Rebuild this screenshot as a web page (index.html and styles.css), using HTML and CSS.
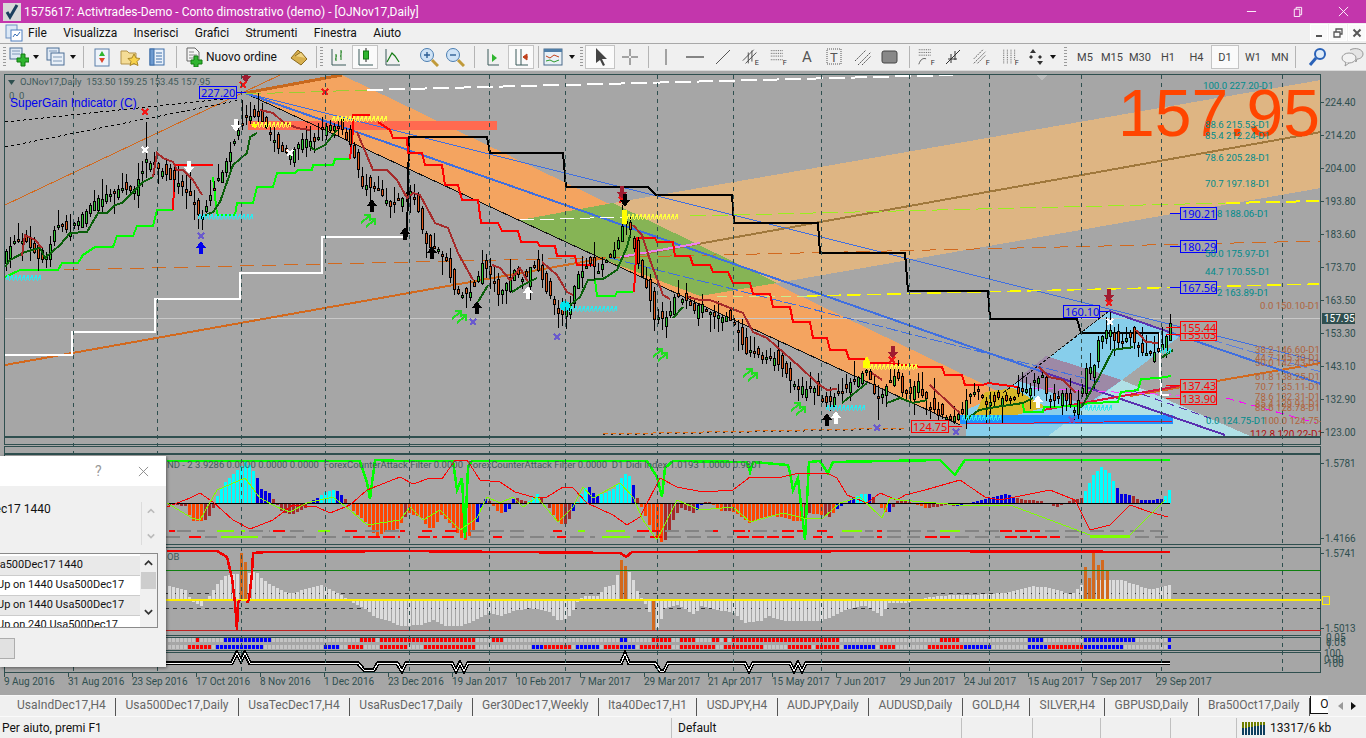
FILE: index.html
```html
<!DOCTYPE html>
<html lang="it">
<head>
<meta charset="utf-8">
<title>MetaTrader</title>
<link rel="stylesheet" href="styles.css">
</head>
<body>
<div class="app">
  <header class="titlebar">
    <svg class="appicon" viewBox="0 0 18 18"><rect width="18" height="18" fill="#d8d8d8"/><path d="M4 9l3 5 7-12" fill="none" stroke="#1c3f5e" stroke-width="3"/></svg>
    <span class="title">1575617: Activtrades-Demo - Conto dimostrativo (demo) - [OJNov17,Daily]</span>
    <div class="winctl">
      <span class="wc"><svg viewBox="0 0 12 12"><path d="M1 6h10" stroke="#fff"/></svg></span>
      <span class="wc"><svg viewBox="0 0 12 12"><path d="M2.500 3.500h6v8h-6zM4.500 3.500v-2h6v8h-2" fill="none" stroke="#fff"/></svg></span>
      <span class="wc"><svg viewBox="0 0 12 12"><path d="M1 1l10 10M11 1L1 11" stroke="#fff"/></svg></span>
    </div>
  </header>

  <nav class="menubar">
    <svg class="menuicon" viewBox="0 0 18 18"><rect x="1" y="1" width="11" height="13" fill="#dbe8f6" stroke="#6b8fc0"/><rect x="6" y="6" width="11" height="11" fill="#fff" stroke="#4f7fc0"/><path d="M8 13l2-3 2 2 3-4" fill="none" stroke="#3a6fb5"/></svg>
    <span class="mi">File</span><span class="mi">Visualizza</span><span class="mi">Inserisci</span><span class="mi">Grafici</span><span class="mi">Strumenti</span><span class="mi">Finestra</span><span class="mi">Aiuto</span>
    <div class="mdi">
      <span class="mdib"><svg viewBox="0 0 10 10"><path d="M2 8h6" stroke="#555" stroke-width="2"/></svg></span>
      <span class="mdib"><svg viewBox="0 0 10 10"><path d="M1 4h6v5H1zM3 4V1h6v5H7" fill="none" stroke="#555" stroke-width="1.300"/></svg></span>
      <span class="mdib"><svg viewBox="0 0 10 10"><path d="M1.500 1.500l7 7M8.500 1.500l-7 7" stroke="#555" stroke-width="2"/></svg></span>
    </div>
  </nav>

  <div class="toolbar">
    <span class="t"><i class="grip"></i></span>
    <span class="t"><svg class="ic" viewBox="0 0 20 20"><rect x="1" y="1" width="12" height="11" fill="#dfe9f5" stroke="#4c6f96"/><path d="M3 4h8M3 7h8" stroke="#7f99b8"/><path d="M12 7h4v4h4v4h-4v4h-4v-4H8v-4h4z" fill="#2fb52f" stroke="#137a13"/></svg></span>
    <span class="t"><i class="drop"></i></span>
    <span class="t"><svg class="ic" viewBox="0 0 20 20"><rect x="1" y="1" width="12" height="12" fill="#dfe9f5" stroke="#4c6f96"/><rect x="5" y="6" width="13" height="12" fill="#e9f0f8" stroke="#4c6f96"/><path d="M3 4h8M7 10h9M7 14h9" stroke="#7f99b8"/></svg></span>
    <span class="t"><i class="drop"></i></span>
    <span class="t"><i class="sep"></i></span>
    <span class="t"><svg class="ic" viewBox="0 0 20 20"><rect x="3" y="2" width="14" height="17" fill="#eef3fa" stroke="#5b7fa8"/><path d="M7 9l3-5 3 5z" fill="#2fb52f"/><path d="M7 11l3 5 3-5z" fill="#e0442a"/></svg></span>
    <span class="t"><svg class="ic" viewBox="0 0 20 20"><path d="M1 4h6l2 2h7v11H1z" fill="#f4dc96" stroke="#b3934a"/><path d="M14 7l2 4 4 .500-3 3 1 4-4-2-4 2 1-4-3-3 4-.500z" fill="#f8d24a" stroke="#a8862a"/></svg></span>
    <span class="t"><svg class="ic" viewBox="0 0 20 20"><rect x="3" y="2" width="14" height="16" fill="#e8f0fa" stroke="#3e6ea8"/><rect x="3" y="2" width="4" height="16" fill="#6d9ad0" stroke="#3e6ea8"/><path d="M9 6h6M9 9h6M9 12h6M9 15h6" stroke="#3e6ea8"/></svg></span>
    <span class="t"><i class="sep"></i></span>
    <span class="t order"><svg class="ic" viewBox="0 0 20 20"><path d="M3 1h8l4 4v9H3z" fill="#f4f4f4" stroke="#666"/><path d="M5 5h5M5 8h8M5 11h8" stroke="#888"/><path d="M10 9h4v4h4v4h-4v3h-4v-3H7v-4h3z" fill="#2fb52f" stroke="#137a13"/></svg><span>Nuovo ordine</span></span>
    <span class="t"><svg class="ic" viewBox="0 0 20 20"><path d="M2 11l7-8 9 9-6 6z" fill="#d8b04e" stroke="#8a6a20"/><path d="M6 9l6-4 5 6" fill="#f0d484" stroke="#8a6a20"/></svg></span>
    <span class="t"><i class="sep"></i></span>
    <span class="t"><i class="grip"></i></span>
    <span class="t"><svg class="ic" viewBox="0 0 20 20"><path d="M4 2v16h14" fill="none" stroke="#3b5a5a"/><path d="M8 7v7M7 12h1M8 9h1M13 3v10M12 9h1M13 5h1" fill="none" stroke="#127a12"/></svg></span>
    <span class="t on"><svg class="ic" viewBox="0 0 20 20"><path d="M4 2v16h14" fill="none" stroke="#3b5a5a"/><path d="M11 1v14" stroke="#222"/><rect x="8.500" y="4" width="5" height="8" fill="#2fb52f" stroke="#137a13"/></svg></span>
    <span class="t"><svg class="ic" viewBox="0 0 20 20"><path d="M4 2v16h14" fill="none" stroke="#3b5a5a"/><path d="M5 15l5-9 3 3 4 6" fill="none" stroke="#127a12" stroke-width="1.200"/></svg></span>
    <span class="t"></span>
    <span class="t"><svg class="ic" viewBox="0 0 20 20"><circle cx="8" cy="8" r="6.500" fill="#cfe3f6" stroke="#4a7db0"/><path d="M5 8h6M8 5v6" stroke="#2e5f95" stroke-width="1.400"/><path d="M13 13l6 6" stroke="#c09a3a" stroke-width="3"/></svg></span>
    <span class="t"><svg class="ic" viewBox="0 0 20 20"><circle cx="8" cy="8" r="6.500" fill="#cfe3f6" stroke="#4a7db0"/><path d="M5 8h6" stroke="#2e5f95" stroke-width="1.400"/><path d="M13 13l6 6" stroke="#c09a3a" stroke-width="3"/></svg></span>
    <span class="t"><i class="sep"></i></span>
    <span class="t"><svg class="ic" viewBox="0 0 20 20"><path d="M5 2v16h11" fill="none" stroke="#3b5a5a"/><path d="M9 7l5 4-5 4z" fill="#2fb52f"/></svg></span>
    <span class="t"><span class="on onb"><svg class="ic" viewBox="0 0 20 20"><path d="M5 2v16h12M10 2v16" fill="none" stroke="#3b5a5a"/><path d="M17 10h-5M12 10l4-3v6z" fill="#c0401a" stroke="#c0401a"/></svg></span></span>
    <span class="t"><i class="sep"></i></span>
    <span class="t"><svg class="ic" viewBox="0 0 20 20"><rect x="1" y="2" width="18" height="16" fill="#e8f0f6" stroke="#4a6a8a"/><rect x="1" y="2" width="18" height="3" fill="#4f7ea8"/><path d="M3 9l4 2 4-3 5 2" fill="none" stroke="#c0401a"/><path d="M3 14l4-1 4 2 5-2" fill="none" stroke="#2a9a2a"/></svg></span>
    <span class="t"><i class="drop"></i></span>
    <span class="t"><i class="grip"></i></span>
    <span class="t on"><svg class="ic" viewBox="0 0 20 20"><path d="M6 1v15l4-3 3 6 2-1-3-6h5z" fill="#444"/></svg></span>
    <span class="t"><svg class="ic" viewBox="0 0 20 20"><path d="M10 2v7M10 11v7M2 10h7M11 10h7" stroke="#555"/></svg></span>
    <span class="t"><i class="sep"></i></span>
    <span class="t"><svg class="ic" viewBox="0 0 20 20"><path d="M10 2v16" stroke="#555"/></svg></span>
    <span class="t"><svg class="ic" viewBox="0 0 20 20"><path d="M1 10h18" stroke="#555" stroke-width="1.400"/></svg></span>
    <span class="t"><svg class="ic" viewBox="0 0 20 20"><path d="M3 17L17 3" stroke="#555"/></svg></span>
    <span class="t"><svg class="ic" viewBox="0 0 22 20"><path d="M2 14L14 2M5 17L17 5M8 17V5M12 15V3" stroke="#444" fill="none"/><text x="15" y="19" class="ict">E</text></svg></span>
    <span class="t"><svg class="ic" viewBox="0 0 22 20"><path d="M2 3h14M2 6h14M2 9h14M2 13h14" stroke="#555" stroke-dasharray="1 1" fill="none"/><text x="15" y="19" class="ict">F</text></svg></span>
    <span class="t tA">A</span>
    <span class="t"><svg class="ic" viewBox="0 0 20 20"><rect x="2" y="2" width="14" height="15" fill="none" stroke="#555" stroke-dasharray="1 1"/><text x="5" y="15" class="icT">T</text></svg></span>
    <span class="t"><svg class="ic" viewBox="0 0 20 20"><path d="M2 14L13 3M5 18L18 5M9 18l9-9" stroke="#555" stroke-dasharray="2 1" fill="none"/></svg></span>
    <span class="t"><svg class="ic" viewBox="0 0 20 20"><rect x="2" y="4" width="15" height="12" rx="2" fill="#888" stroke="#444"/></svg></span>
    <span class="t"><i class="sep"></i></span>
    <span class="t"><svg class="ic" viewBox="0 0 22 20"><path d="M2 2h14M2 5h14M2 8h14" stroke="#555" stroke-dasharray="1 1" fill="none"/><path d="M2 18c2-6 5-7 8-6" stroke="#555" fill="none"/><text x="15" y="19" class="ict">F</text></svg></span>
    <span class="t"><svg class="ic" viewBox="0 0 20 20"><path d="M2 17L16 3M7 16V7M11 13V4M4 12h9" stroke="#333" fill="none"/></svg></span>
    <span class="t"><svg class="ic" viewBox="0 0 22 20"><path d="M2 12L12 2M2 17L15 4M6 17l9-9" stroke="#555" stroke-dasharray="2 1" fill="none"/><text x="15" y="19" class="ict">F</text></svg></span>
    <span class="t"><svg class="ic" viewBox="0 0 22 20"><path d="M3 2v16M7 2v16M11 2v16M15 2v11" stroke="#555" stroke-dasharray="1 1" fill="none"/><text x="15" y="19" class="ict">F</text></svg></span>
    <span class="t"><svg class="ic" viewBox="0 0 20 20"><path d="M6 2l3 4H3zM13 18l3-4h-6zM4 8l2 2-2 2-2-2zM13 8l2 2-2 2-2-2z" fill="#333"/></svg></span>
    <span class="t"><i class="drop"></i></span>
    <span class="t"><i class="grip"></i></span>
    <span class="t tf">M5</span><span class="t tf">M15</span><span class="t tf">M30</span><span class="t tf">H1</span><span class="t tf">H4</span><span class="t tf on">D1</span><span class="t tf">W1</span><span class="t tf">MN</span>
    <span class="t"><i class="sep"></i></span>
    <span class="t"><svg class="ic" viewBox="0 0 20 20"><circle cx="12" cy="7" r="5" fill="#e0ecf8" stroke="#2a62b8" stroke-width="2"/><path d="M8 11l-6 7" stroke="#2a62b8" stroke-width="3"/></svg></span>
    <span class="t"><svg class="ic chat" viewBox="0 0 24 20"><path d="M9 3c5-3 13-1 13 4 0 3-3 5-6 5l-1 3-2-3" fill="#e4e4e4" stroke="#999"/><ellipse cx="8" cy="11" rx="7" ry="5" fill="#f2f2f2" stroke="#999"/><path d="M5 15l-1 4 4-3" fill="#f2f2f2" stroke="#999"/></svg></span>
  </div>

  <main class="chart">
    <svg id="plot" class="plot" viewBox="0 70 1366 625" width="1366" height="625"></svg>
  </main>

  <div class="tabs">
    <span class="tab first">UsaIndDec17,H4</span>
    <span class="tab">Usa500Dec17,Daily</span>
    <span class="tab">UsaTecDec17,H4</span>
    <span class="tab">UsaRusDec17,Daily</span>
    <span class="tab">Ger30Dec17,Weekly</span>
    <span class="tab">Ita40Dec17,H1</span>
    <span class="tab">USDJPY,H4</span>
    <span class="tab">AUDJPY,Daily</span>
    <span class="tab">AUDUSD,Daily</span>
    <span class="tab">GOLD,H4</span>
    <span class="tab">SILVER,H4</span>
    <span class="tab">GBPUSD,Daily</span>
    <span class="tab">Bra50Oct17,Daily</span>
    <span class="tab active">OJ</span>
    <span class="tabscroll"><i class="al"></i><i class="ar"></i></span>
  </div>

  <footer class="status">
    <span class="s s1">Per aiuto, premi F1</span>
    <span class="s s2">Default</span>
    <span class="s s3"></span>
    <span class="s s4"></span>
    <span class="s s5"></span>
    <span class="s s6"></span>
    <span class="s s7"><svg class="bars" viewBox="0 0 24 14"><path d="M1 14V7M4 14V7M7 14V6M10 14V6M13 14V5M16 14V5M19 14V4M22 14V4" stroke="#0f3f5f" stroke-width="2"/><path d="M1 7V1M4 7V1M7 6V1M10 6V1M13 5V1M16 5V1M19 4V1M22 4V1" stroke="#6f7f00" stroke-width="2"/></svg><span>13317/6 kb</span></span>
  </footer>

  <section class="dialog">
    <div class="dlgtitle"><span class="q">?</span><svg class="dx" viewBox="0 0 12 12"><path d="M1 1l10 10M11 1L1 11" stroke="#888"/></svg></div>
    <div class="dlgbody">
      <div class="msg">
        <p class="msgtext">Usa500Dec17 1440</p>
        <div class="msgscroll"><svg viewBox="0 0 10 40" class="mss"><path d="M1 6l4-4 4 4" fill="none" stroke="#bbb" stroke-width="2"/><path d="M1 33l4 4 4-4" fill="none" stroke="#bbb" stroke-width="2"/></svg></div>
      </div>
      <div class="list">
        <div class="rows">
          <div class="row alt i1">sa500Dec17 1440</div>
          <div class="row i2">Up on 1440 Usa500Dec17</div>
          <div class="row alt i2">Up on 1440 Usa500Dec17</div>
          <div class="row i2">Up on 240 Usa500Dec17</div>
        </div>
        <div class="sb"><svg viewBox="0 0 10 8" class="ch"><path d="M1 6l4-4 4 4" fill="none" stroke="#333" stroke-width="2"/></svg><i class="thumb"></i><svg viewBox="0 0 10 8" class="ch chd"><path d="M1 2l4 4 4-4" fill="none" stroke="#333" stroke-width="2"/></svg></div>
      </div>
      <div class="btn"></div>
    </div>
  </section>
</div>
<script src="chart.js"></script>
</body>
</html>
```
FILE: styles.css
```css
*{box-sizing:border-box}
html,body{margin:0;padding:0;height:100%;overflow:hidden;background:#f0f0f0}
body{font-family:Roboto,"Noto Sans",sans-serif;font-size:12px;color:#111}
.app{position:relative;width:1366px;height:738px;display:flex;flex-direction:column;overflow:hidden}

.titlebar{height:23px;background:#c336ac;display:flex;align-items:center;padding-left:3px;color:#fff}
.appicon{width:18px;height:18px;flex:none}
.title{margin-left:3px;font-size:12px;white-space:nowrap}
.winctl{margin-left:auto;display:flex;height:23px}
.wc{width:46px;display:flex;align-items:center;justify-content:center}
.wc svg{width:11px;height:11px}

.menubar{height:21px;background:#f0f0f0;display:flex;align-items:center;padding-left:5px;border-bottom:1px solid #a8a8a8}
.menuicon{width:18px;height:18px;flex:none;margin-right:5px}
.mi{padding:0 16.300px 0 0;font-size:12px;white-space:nowrap}
.mdi{margin-left:auto;display:flex;gap:1px;padding-right:0;align-self:flex-start;margin-top:1px}
.mdib{width:18px;height:17px;background:#fafafa;border:1px solid #fff;display:flex;align-items:center;justify-content:center}
.mdib svg{width:10px;height:10px}

.toolbar{height:26px;background:#f0f0f0;display:grid;grid-auto-flow:column;align-items:center;
 grid-template-columns:8px 22px 12px 28px 6px 14px 24px 32px 22px 16px 100px 30px 4px 6px 28px 26px 28px 10px 26px 26px 12px 26px 30px 4px 26px 11px 8px 30px 30px 6px 30px 28px 28px 28px 28px 28px 28px 27px 28px 10px 26px 28px 28px 30px 22px 10px 14px 26px 28px 28px 28px 29px 28px 28px 26px 4px 42px 27px}
.t{display:flex;align-items:center;justify-content:center;height:24px}
.ic{width:20px;height:20px;flex:none}
.ic.chat{width:24px}
.on{background:#fafafa;border:1px solid #c4c4c4}
.onb{width:26px;height:24px;display:flex;align-items:center;justify-content:center}
.grip{display:block;width:3px;height:20px;background:repeating-linear-gradient(#9a9a9a 0 1px,transparent 1px 3px)}
.sep{display:block;width:1px;height:22px;background:#b4b4b4}
.drop{display:block;width:0;height:0;border:3px solid transparent;border-top:4px solid #111;border-bottom:0}
.order{justify-content:flex-start;padding-left:0;gap:2px;font-size:12px;white-space:nowrap}
.tf{font-size:11px;color:#444}
.tA{font-size:15px;color:#555}
.ict{font:8px Roboto,sans-serif;fill:#333}
.icT{font:13px Roboto,sans-serif;fill:#555}

.chart{height:625px;background:#a6a6a6;border-top:1px solid #dadada;overflow:hidden;position:relative}
.plot{display:block;margin-top:-1px}
.plot text{font-family:Roboto,sans-serif;font-size:10px;shape-rendering:auto}
.plot .lbl{font-family:"Noto Sans",sans-serif;font-size:11px}
.plot .big{font-family:"Liberation Sans",Arial,sans-serif;font-size:66px;fill:#ff4500}
.plot .sg{font-family:"Liberation Sans",Arial,sans-serif;font-size:12px;fill:#0000f0}
.plot .hd{fill:#3f5a5a;font-size:9.500px}
.plot .ax{fill:#2f4f4f;font-size:10px}
.plot .fibt{fill:#008b8b;font-size:9.600px}
.plot .fibb{fill:#b0643c;font-size:9.600px}

.tabs{height:21px;background:#f0f0f0;display:flex;align-items:flex-start;position:relative;padding-left:4px;border-top:1px solid #f7f7f7;overflow:hidden;border-left:0}
.tab{height:18px;margin-top:2px;padding:0 9.350px;font-size:12px;line-height:15px;color:#666;white-space:nowrap;border-right:1px solid #555;flex:none}
.tab.first{padding-left:13px}
.tab.active{background:#fff;border:1px solid #111;border-top:0;color:#111;margin-top:0;height:18px;padding-top:1px;width:40px}
.tabscroll{position:absolute;right:0;top:0;width:38px;height:20px;background:#f0f0f0;display:flex;align-items:center;justify-content:space-around;padding:0 6px}
.al{width:0;height:0;border:4px solid transparent;border-right:5px solid #999;border-left:0}
.ar{width:0;height:0;border:4px solid transparent;border-left:5px solid #111;border-right:0}

.status{height:22px;background:#f0f0f0;display:flex;align-items:center;font-size:12px;border-top:1px solid #fafafa}
.s{height:20px;display:flex;align-items:center;border-right:1px solid #c0c0c0;white-space:nowrap}
.s1{width:672px;padding-left:2px}
.s2{width:290px;padding-left:6px}
.s3{width:71px}.s4{width:68px}.s5{width:70px}.s6{width:66px}
.s7{flex:1;border-right:0;padding-left:5px;gap:4px}
.bars{width:24px;height:14px}

.dialog{position:absolute;left:0;top:456px;width:166px;height:211px;background:#f0f0f0;box-shadow:1px 1px 3px rgba(0,0,0,.45);display:flex;flex-direction:column;overflow:hidden}
.dlgtitle{height:30px;background:#fff;position:relative;display:flex;align-items:center;flex:none}
.q{margin-left:95px;font-size:14px;color:#999}
.dx{width:11px;height:11px;margin-left:36px}
.dlgbody{flex:1;display:flex;flex-direction:column}
.msg{height:67px;position:relative;display:flex;flex:none}
.msgtext{margin:16px 0 0 -54px;font-size:12px;white-space:nowrap;width:195px}
.msgscroll{width:22px;border-left:1px solid #dcdcdc;height:43px;margin-top:16px;flex:none}
.mss{display:block;width:8px;height:40px;margin:2px 0 0 5px}
.list{width:158px;height:75px;border:1px solid #8a8a8a;border-left:0;background:#fff;display:flex;flex:none;overflow:hidden}
.rows{flex:1;overflow:hidden;padding-top:2px}
.row{height:20px;line-height:18px;border-bottom:1px solid #ccc;font-size:11px;white-space:nowrap;overflow:hidden}
.alt{background:#e9e9e9}
.i1{text-indent:-6px}
.i2{text-indent:-3px}
.sb{width:17px;background:#f0f0f0;display:flex;flex-direction:column;align-items:center;flex:none;padding-top:5px}
.ch{width:9px;height:8px;flex:none}
.thumb{display:block;width:15px;height:17px;background:#cdcdcd;margin-top:5px}
.chd{margin-top:19px}
.btn{width:15px;height:21px;margin-top:10px;background:#e1e1e1;border:1px solid #adadad;border-left:0}
```
FILE: chart.js
```js
(function(){
var svg=document.getElementById('plot'),o=[];
var DS='#2f4f4f';
function pts(a){return a.map(function(p){return p[0]+','+p[1]}).join(' ')}
function pl(a,c,w,d){o.push('<polyline points="'+pts(a)+'" fill="none" stroke="'+c+'" stroke-width="'+(w||1)+'"'+(d?' stroke-dasharray="'+d+'"':'')+'/>')}
function pg(a,c){o.push('<polygon points="'+pts(a)+'" fill="'+c+'"/>')}
function rc(x,y,w,h,c,s){o.push('<rect x="'+x+'" y="'+y+'" width="'+w+'" height="'+h+'" fill="'+c+'"'+(s?' stroke="'+s+'"':'')+'/>')}
function tx(x,y,t,cl,fill,a){o.push('<text x="'+x+'" y="'+y+'"'+(cl?' class="'+cl+'"':'')+(fill?' fill="'+fill+'"':'')+(a?' text-anchor="'+a+'"':'')+'>'+t+'</text>')}
function interp(a,x){if(x<=a[0][0])return a[0][1];for(var i=1;i<a.length;i++){if(x<=a[i][0]){var t=(x-a[i-1][0])/(a[i][0]-a[i-1][0]);return a[i-1][1]+t*(a[i][1]-a[i-1][1])}}return a[a.length-1][1]}
var seed=7;function R(){seed=(seed*16807)%2147483647;return seed/2147483647}

o.push('<defs><clipPath id="mc"><rect x="5" y="75" width="1316" height="361"/></clipPath></defs>');
o.push('<g shape-rendering="crispEdges">');
o.push('<g clip-path="url(#mc)">');

/* filled objects */
pg([[613,203],[1321,80],[1321,188],[777,283]],'#deb583');
pg([[245,93],[342,75],[1010,397],[960,425]],'#f4a460');
pg([[520,220],[613,203],[777,283],[700,296],[600,258]],'#86b455');
rc(248,121,249,9,'#ff6a50');
pg([[1003,393],[1109,311],[1179,337],[1122,380],[1048,436],[966,436],[966,410]],'#87ceeb');
pg([[1122,380],[1250,436],[1048,436]],'#b0e0e6');
pg([[1016,380],[1046,356],[1122,380],[1086,405]],'#9d89a6');
pg([[985,392],[1013,388],[1046,407],[1016,415],[975,415]],'#d8b828');
rc(960,415,213,9,'#1e90ff');

/* grey last price line */
pl([[5,318],[1321,318]],'#c8c8c8');

/* straight trend lines */
pl([[5,205],[280,75]],'#d2691e');
pl([[245,93],[342,75]],'#c8691e',3);
pl([[5,365],[605,258]],'#d2691e',2);
pl([[1130,396],[1321,363]],'#d2691e',2);
pl([[20,271],[1321,241]],'#d2691e',1,'14 8');
pl([[620,258],[1321,132]],'#a0783c',2);
pl([[5,122],[233,98]],'#000',1,'3 3');
pl([[5,147],[240,100]],'#000',1,'3 3');
pl([[245,93],[960,425]],'#111');
pl([[1003,393],[1109,311]],'#111',1,'4 1');
pl([[245,93],[1321,362]],'#3f6fe0');
pl([[610,258],[1100,382]],'#3f6fe0',1,'12 3');
pl([[245,93],[1040,371]],'#3f6fe0',2);
pl([[1040,371],[1225,435]],'#5a30b0',2);
pl([[1109,311],[1169,332]],'#5a30b0',2);
pl([[1169,332],[1321,384]],'#3f6fe0',2);
pl([[245,94],[367,90]],'#9acd32',1,'16 6');
pl([[367,90],[953,75]],'#fff',2,'16 6');
pl([[520,220],[625,217]],'#fff',1,'14 6');
pl([[690,216],[1226,203]],'#9aee20',1,'16 6');
pl([[1226,203],[1319,201]],'#ffff00',2,'14 6');
pl([[717,297],[807,296]],'#c8ee90',1,'10 6');
pl([[807,296],[1319,284]],'#ffff00',1.500,'14 6');
pl([[603,434],[905,428]],'#e06a10',1,'5 3');
pl([[603,435],[905,429]],'#222',1,'2 6');
pl([[1043,410],[1179,386]],'#dc143c',2);
pl([[966,424],[1173,421],[1316,421]],'#dc143c');
pl([[620,257],[700,243]],'#ee80ee',2);
pl([[1033,388],[1216,397]],'#ff40ff',1,'8 5');
pl([[1226,398],[1316,423]],'#ff00ff',1,'8 5');
pl([[1130,390],[1215,420]],'#5a30b0',1,'8 5');
pl([[1205,338],[1321,372]],'#5a7fe0',1,'18 4');

/* step lines */
pl([[5,355],[72,355],[72,332],[155,332],[155,299],[240,299],[240,273],[322,273],[322,237],[405,237]],'#fff',2);
pl([[407,237],[409,137],[487,137],[490,153],[563,153],[566,187],[648,187],[656,195],[732,195],[734,223],[818,223],[820,253],[905,253],[908,291],[988,291],[990,319],[1077,319],[1081,333],[1158,333]],'#000',2);
pl([[1159,333],[1161,395],[1169,395]],'#fff',2);
var GR='#00ff00',RD='#ff0000',DG='#0a5f0a',DR='#a52a2a';
pl([[5,277],[20,270],[58,270],[62,263],[78,263],[83,255],[95,247],[113,247],[117,236],[133,236],[137,226],[153,226],[157,210],[173,210]],GR,2);
pl([[173,210],[175,165],[213,165]],RD,2);
pl([[213,177],[217,215],[235,215],[237,203],[253,203],[257,187],[273,187],[277,173],[295,173],[298,170],[312,170],[313,165],[333,165],[335,159],[350,159]],GR,2);
pl([[350,159],[353,130],[353,115],[370,115]],RD,2);
pl([[378,122],[390,130],[393,138],[407,138],[408,153],[422,153],[425,165],[442,165],[445,185],[458,185],[462,200],[478,200],[481,223],[498,223],[502,231],[518,231],[521,242],[537,242],[540,246],[555,246],[557,256],[575,256],[577,265],[595,265]],RD,2);
pl([[595,280],[597,296],[615,296],[617,292],[633,292]],GR,2);
pl([[634,292],[637,238],[655,238],[657,242],[673,242],[675,256],[690,256],[693,265],[710,265],[713,272],[728,272],[733,283],[750,283],[753,294],[770,294],[773,307],[790,307],[793,322],[810,322],[813,338],[827,338],[830,350],[846,350],[849,359],[865,359],[868,363],[887,363],[922,367],[942,367],[945,375],[962,375],[965,385],[983,385],[988,383],[1018,387]],RD,2);
pl([[1023,403],[1024,412],[1043,412],[1044,407],[1079,406],[1089,403],[1118,402],[1121,392],[1138,390],[1141,379],[1159,378],[1171,376]],GR,2);

/* candles */
var path=[[5,255],[15,238],[25,240],[35,255],[45,260],[55,225],[70,230],[90,205],[105,195],[120,188],[135,190],[145,160],[155,165],[165,175],[175,180],[190,195],[200,220],[210,195],[222,170],[232,145],[245,115],[255,115],[265,125],[280,150],[290,155],[300,140],[315,140],[325,125],[340,125],[352,150],[362,185],[375,185],[390,205],[398,200],[412,190],[422,228],[425,242],[445,255],[449,273],[453,287],[462,295],[468,293],[477,282],[482,262],[490,273],[497,293],[505,287],[513,270],[525,280],[533,262],[545,287],[557,310],[562,315],[570,302],[577,277],[587,263],[597,270],[605,260],[613,252],[622,227],[625,217],[630,230],[637,260],[642,275],[649,293],[653,317],[662,320],[670,310],[673,295],[682,298],[693,310],[700,303],[713,315],[725,317],[733,320],[742,343],[746,352],[753,350],[762,358],[773,358],[782,368],[789,377],[798,388],[807,388],[813,385],[818,397],[825,402],[830,400],[842,390],[853,380],[862,372],[865,370],[869,377],[877,400],[885,390],[892,377],[897,377],[903,395],[913,390],[917,380],[922,393],[933,410],[942,415],[950,418],[962,413],[967,398],[978,390],[986,402],[999,398],[1011,398],[1029,387],[1041,373],[1046,393],[1054,402],[1061,392],[1066,398],[1073,410],[1081,393],[1086,367],[1093,370],[1098,340],[1103,337],[1108,323],[1113,337],[1121,343],[1129,333],[1136,348],[1146,352],[1153,352],[1158,350],[1166,335],[1170,322]];
var wick={146:[122,178],622:[205,240],243:[100,130],878:[385,420],1170:[314,335],558:[300,328],1110:[312,350],530:[285,300]};
for(var x=6;x<=1170;x+=4){
  var c=interp(path,x)+(R()-.5)*4,op=interp(path,x-4)+(R()-.5)*18,t=Math.min(c,op),b=Math.max(c,op);
  if(b-t<2){b=t+2}
  var up=c<op,wt=t-R()*R()*20-1,wb=b+R()*R()*20+1;
  for(var k in wick){if(Math.abs(+k-x)<2){wt=wick[k][0];wb=wick[k][1]}}
  t=Math.round(t);b=Math.round(b);
  o.push('<path d="M'+x+'.5 '+Math.round(wt)+'V'+Math.round(wb)+'" stroke="#000"/>');
  rc(x-.5,t+.5,2,b-t,up?'#2fc72f':'#e0581a','#000');
}

/* MA segments (drawn over the candles) */
pl([[5,267],[10,260],[25,252],[40,248],[45,258],[60,245],[70,233],[87,232],[98,213],[107,213],[115,205],[122,203],[143,182],[153,177]],DG,2);
pl([[22,256],[25,235],[35,240],[42,248]],DR,2);
pl([[153,177],[157,153],[163,158],[173,162],[177,170],[183,170],[193,180],[202,195]],DR,2);
pl([[202,217],[213,212],[220,202],[233,165],[247,153],[250,137],[257,133]],DG,2);
pl([[260,110],[273,113],[283,122],[297,128],[310,130]],DR,2);
pl([[310,147],[315,150],[325,145],[337,130]],DG,2);
pl([[357,132],[373,170],[387,170],[397,180],[407,198],[413,193],[420,195],[427,208],[435,223],[448,228],[458,253],[473,280]],DR,2);
pl([[478,302],[488,285]],DG,2);
pl([[492,265],[500,268],[510,280],[520,268],[528,282]],DR,2);
pl([[512,292],[523,285],[537,278]],DG,2);
pl([[542,262],[557,275],[567,292],[573,295]],DR,2);
pl([[570,305],[580,297],[588,280],[603,279],[617,270],[627,247],[630,235]],DG,2);
pl([[633,225],[642,235],[650,260],[663,295],[670,299]],DR,2);
pl([[673,318],[683,307]],DG,2);
pl([[688,297],[700,300],[710,300],[743,313],[753,332],[767,338],[800,367],[817,383],[827,390],[837,389]],DR,2);
pl([[842,403],[867,383]],DG,2);
pl([[872,373],[882,380]],DR,2);
pl([[887,403],[900,398],[913,403],[927,400]],DG,2);
pl([[930,385],[953,407],[960,413]],DR,2);
pl([[966,420],[979,410],[996,407],[1023,403],[1033,398]],DG,2);
pl([[1039,367],[1049,377],[1063,380],[1076,393]],DR,2);
pl([[1081,408],[1099,377],[1113,350],[1133,347]],DG,2);
pl([[1136,330],[1146,342],[1158,343]],DR,2);
pl([[1161,358],[1173,350]],DG,2);

/* markers */
function arrD(x,y,c){o.push('<path d="M'+(x-2)+' '+(y-8)+'h4v6h3l-5 7-5-7h3z" fill="'+c+'"/>')}
function arrU(x,y,c){o.push('<path d="M'+(x-2)+' '+(y+8)+'h4v-6h3l-5-7-5 7h3z" fill="'+c+'"/>')}
function xm(x,y,c){o.push('<path d="M'+(x-3)+' '+(y-3)+'l6 6M'+(x+3)+' '+(y-3)+'l-6 6" stroke="'+c+'" stroke-width="2"/>')}
function chev(x,y,c){o.push('<path d="M'+(x-7)+' '+(y+7)+'l8-7M'+(x-4)+' '+(y-1)+'h6v6M'+(x-2)+' '+(y+11)+'l8-7M'+(x+1)+' '+(y+3)+'h6v6" fill="none" stroke="'+c+'" stroke-width="2"/>')}
function teeth(x1,x2,y,c){var a=[];for(var x=x1;x<x2;x+=4){a.push([x,y+5],[x+2,y],[x+3,y+5])}pl(a,c,1)}
teeth(6,40,275,'#30e8ee');teeth(198,251,214,'#30e8ee');teeth(566,616,306,'#30e8ee');teeth(826,866,405,'#30e8ee');teeth(962,1002,415,'#30e8ee');teeth(1085,1110,405,'#30e8ee');teeth(1160,1172,348,'#30e8ee');
teeth(252,292,122,'#ffff40');teeth(332,385,116,'#ffff40');teeth(627,676,214,'#ffff40');teeth(866,916,364,'#ffff40');
o.push('<circle cx="565" cy="306" r="5" fill="#00e5ee"/>');
o.push('<path d="M250 124l5 5 3-5z" fill="#ffff00"/><path d="M622 210h5v14h-5z" fill="#ffff00"/><path d="M863 362l4-6 3 6v6h-7z" fill="#ffff00"/>');
[[622,194,'#a01c30'],[893,354,'#a01c30'],[1109,297,'#a01c30'],[246,78,'#a01c30']].forEach(function(a){arrD(a[0],a[1],a[2])});
[[145,112],[325,92],[243,85],[622,200],[892,360],[1109,303]].forEach(function(a){xm(a[0],a[1],'#f01818')});
[[201,236],[473,322],[557,337],[877,428],[956,432],[1072,420]].forEach(function(a){xm(a[0],a[1],'#6a5acd')});
arrU(201,246,'#0000ee');
arrD(189,169,'#fff');arrD(236,127,'#fff');arrU(528,291,'#fff');arrU(836,416,'#fff');
arrD(625,202,'#000');arrU(372,204,'#000');arrU(405,232,'#000');arrU(432,251,'#000');arrU(477,306,'#000');arrU(827,418,'#000');arrU(1038,400,'#fff');
chev(368,216,'#22dd22');chev(459,312,'#22dd22');chev(660,350,'#22dd22');chev(750,370,'#22dd22');chev(798,404,'#22dd22');
xm(145,150,'#fff');xm(290,153,'#fff');xm(1110,322,'#fff');
o.push('</g>');

/* pane frames */
[[437,444],[446,453],[454,544],[547,635],[637,650],[652,672]].forEach(function(a){o.push('<rect x="4.5" y="'+(a[0]+.5)+'" width="1316" height="'+(a[1]-a[0])+'" fill="none" stroke="'+DS+'"/>')});
o.push('<rect x="4.5" y="74.5" width="1316" height="362" fill="none" stroke="'+DS+'"/>');

/* pane 1 histogram */
var hs=[[167,-2,'b'],[185,-3,'b'],[190,-18,'o'],[203,-18,'o'],[207,-15,'b'],[213,-3,'b'],[217,10,'c'],[225,22,'c'],[235,32,'c'],[245,42,'c'],[255,28,'c'],[260,14,'B'],[268,10,'B'],[272,4,'b'],[280,-8,'b'],[290,-12,'b'],[305,-4,'b'],[310,2,'B'],[318,6,'B'],[325,12,'c'],[335,13,'c'],[340,8,'B'],[345,3,'b'],[352,-8,'o'],[365,-20,'o'],[375,-34,'o'],[385,-28,'o'],[395,-28,'o'],[400,-20,'o'],[407,-10,'b'],[420,-15,'o'],[427,-25,'o'],[433,-25,'o'],[440,-12,'o'],[450,-22,'o'],[460,-35,'o'],[465,-38,'o'],[475,-22,'o'],[477,-16,'B'],[482,3,'B'],[485,4,'B'],[488,2,'b'],[497,-9,'o'],[502,-10,'o'],[507,-8,'B'],[513,6,'B'],[520,3,'b'],[527,1,'b'],[533,7,'c'],[537,10,'c'],[542,3,'b'],[548,-5,'b'],[557,-20,'o'],[563,-22,'o'],[570,-14,'b'],[573,-5,'B'],[580,9,'c'],[585,17,'c'],[589,15,'B'],[593,8,'B'],[597,8,'B'],[603,9,'c'],[613,15,'c'],[620,25,'c'],[625,30,'c'],[630,25,'c'],[633,14,'B'],[637,2,'b'],[642,-8,'o'],[647,-20,'o'],[653,-30,'o'],[662,-42,'o'],[669,-25,'b'],[673,-14,'b'],[680,-5,'b'],[693,-10,'b'],[698,-5,'B'],[702,1,'B'],[708,1,'b'],[713,-3,'o'],[720,-8,'o'],[728,-8,'b'],[735,-10,'o'],[747,-20,'o'],[753,-18,'o'],[760,-15,'o'],[767,-13,'o'],[780,-14,'o'],[793,-18,'o'],[803,-18,'o'],[808,-10,'b'],[820,-12,'o'],[828,-14,'b'],[833,-9,'o'],[840,-3,'B'],[848,3,'B'],[853,6,'B'],[860,9,'c'],[867,9,'c'],[870,9,'B'],[873,4,'b'],[880,-5,'o'],[885,-10,'o'],[888,-9,'B'],[897,3,'b'],[905,2,'b'],[915,-2,'o'],[925,-5,'o'],[935,-4,'b'],[945,-2,'b'],[955,-3,'b'],[975,2,'B'],[985,4,'B'],[995,7,'B'],[1005,9,'B'],[1015,5,'B'],[1025,3,'b'],[1040,2,'b'],[1055,-4,'b'],[1070,3,'b'],[1080,5,'b'],[1085,14,'c'],[1092,28,'c'],[1100,36,'c'],[1108,30,'c'],[1115,16,'c'],[1120,9,'B'],[1130,8,'B'],[1138,3,'b'],[1148,3,'B'],[1160,4,'B'],[1165,8,'c'],[1169,15,'c']];
var hc={b:'#a52a2a',o:'#ff4500',c:'#00ffff',B:'#0000e0'};
function key(a,x){for(var i=0;i<a.length;i++){if(a[i][0]>=x)return a[i]}return a[a.length-1]}
for(var x=168;x<=1170;x+=4){var v=Math.round(interp(hs,x));if(!v)continue;var ct=hc[key(hs,x)[2]];if(v>0)rc(x,503-v,3,v,ct);else rc(x,503,3,-v,ct)}
pl([[167,503],[1170,503]],'#000');

/* dash rows */
function span(y,a){a.forEach(function(s){var col=s[2]=='g'?'#848484':s[2]=='r'?'#ff0000':'#7fff00';pl([[s[0],y],[s[1],y]],col,2,s[2]=='g'?'14 6':s[2]=='r'?'12 3':'')})}
span(531,[[169,175,'r'],[177,205,'g'],[217,234,'l'],[241,245,'l'],[249,270,'g'],[273,285,'r'],[290,310,'g'],[318,330,'l'],[345,360,'r'],[365,400,'g'],[400,405,'r'],[422,432,'r'],[445,460,'r'],[470,525,'g'],[553,562,'r'],[578,585,'l'],[606,625,'l'],[637,660,'r'],[665,713,'g'],[713,718,'r'],[733,750,'r'],[753,777,'g'],[782,803,'r'],[817,827,'r'],[842,862,'l'],[865,873,'g'],[877,882,'r'],[887,935,'g'],[940,960,'l'],[965,1000,'g'],[1000,1040,'r'],[1045,1085,'g'],[1090,1125,'g'],[1130,1168,'g']]);
span(537,[[166,185,'g'],[189,202,'r'],[205,217,'g'],[221,258,'l'],[262,350,'g'],[353,400,'r'],[418,437,'r'],[442,455,'r'],[470,490,'g'],[493,502,'r'],[510,555,'g'],[557,566,'r'],[570,595,'g'],[602,630,'l'],[633,645,'g'],[650,663,'r'],[667,733,'g'],[737,795,'r'],[813,822,'r'],[827,833,'r'],[840,877,'g'],[877,882,'r'],[887,920,'g'],[925,950,'r'],[955,1000,'g'],[1005,1060,'r'],[1065,1085,'g'],[1090,1130,'l'],[1135,1168,'g']]);

pl([[167,461],[360,461],[367,483],[370,499],[375,460],[400,461],[453,461],[457,490],[462,478],[465,538],[468,467],[472,461],[647,461],[657,477],[662,497],[665,468],[673,461],[747,462],[750,472],[753,462],[788,465],[790,473],[793,490],[798,478],[805,540],[809,462],[820,461],[828,473],[833,462],[940,460],[955,475],[965,460],[1170,460]],'#00ff00',2.500);
pl([[167,507],[190,498],[200,493],[213,502],[233,520],[250,529],[273,520],[293,505],[317,507],[330,513],[350,505],[367,490],[400,477],[413,484],[430,478],[442,479],[455,460],[467,460],[480,480],[500,482],[515,492],[533,497],[547,497],[563,487],[573,488],[587,503],[613,515],[627,525],[640,517],[660,478],[677,487],[703,492],[733,490],[750,477],[777,478],[800,473],[827,473],[837,478],[847,495],[867,503],[880,493],[897,500],[905,495],[925,490],[960,480],[985,497],[1000,500],[1050,490],[1075,500],[1090,530],[1110,525],[1130,505],[1150,512],[1168,517]],'#ff0000');
pl([[167,503],[192,518],[200,520],[217,490],[245,478],[260,498],[277,507],[290,512],[307,503],[333,497],[350,510],[367,525],[400,520],[410,507],[423,520],[440,510],[460,530],[477,518],[487,497],[500,503],[513,497],[523,507],[537,497],[558,522],[573,507],[583,487],[593,498],[620,483],[633,497],[643,520],[657,540],[677,500],[700,510],[733,507],[750,522],[783,513],[803,518],[823,518],[840,503],[860,497],[882,518],[890,498],[900,500],[960,505],[1010,505],[1050,520],[1090,535],[1130,535],[1165,500]],'#7fff00');

/* pane 2 */
pl([[5,593],[1321,593]],'#333',1,'4 4');
pl([[5,608],[1321,608]],'#333',1,'4 4');
var gh=[[167,14],[185,10],[190,-1],[200,-6],[207,3],[217,17],[225,25],[232,26],[255,28],[262,20],[275,12],[290,6],[300,10],[320,15],[335,8],[350,-2],[365,-10],[375,-18],[385,-20],[395,-25],[400,-26],[420,-25],[433,-20],[443,-26],[460,-26],[473,-21],[487,-13],[500,-16],[513,-11],[528,-8],[547,-11],[557,-21],[567,-18],[573,-8],[577,0],[582,4],[597,4],[605,14],[612,15],[617,27],[622,32],[630,27],[633,17],[638,4],[642,0],[645,-6],[650,-16],[657,-30],[663,-8],[677,-5],[693,-15],[700,-6],[717,-10],[733,-13],[743,-23],[760,-21],[767,-16],[783,-21],[820,-21],[833,-16],[843,-10],[863,-5],[880,-16],[887,-3],[905,-3],[930,3],[950,5],[970,5],[990,6],[1010,8],[1030,14],[1050,12],[1070,5],[1085,20],[1120,20],[1135,15],[1150,10],[1168,15]];
for(var x=168;x<=1170;x+=4){var v=Math.round(interp(gh,x));if(!v)continue;if(v>0)rc(x,600-v,3,v,'#dcdcdc');else rc(x,600,3,-v,'#dcdcdc')}
[[240,47],[244,38],[620,40],[624,34],[1084,33],[1088,22],[1092,47],[1097,35],[1101,40],[1106,30]].forEach(function(a){rc(a[0],600-a[1],3,a[1],'#d2691e')});
rc(652,600,3,31,'#d2691e');
pl([[5,570],[1321,570]],'#108010');
pl([[5,600],[1321,600]],'#ffee00',2);
pl([[5,630],[1321,630]],'#c02020');
pl([[167,551],[217,551],[227,557],[232,578],[235,603],[237,630],[238,603],[240,600]],'#f00000',2.500);
pl([[247,603],[249,600],[252,573],[253,553],[267,552],[400,551],[620,553],[626,557],[632,552],[900,551],[1170,552]],'#f00000',2.500);
o.push('<rect x="1322" y="596" width="7" height="8" fill="none" stroke="#ffee00"/>');

/* pane 3 squares */
var r1=[[197,199,'r'],[224,271,'B'],[360,376,'r'],[380,475,'r'],[492,503,'r'],[620,627,'B'],[652,672,'r'],[680,695,'r'],[712,720,'r'],[724,727,'r'],[732,840,'r'],[940,958,'r'],[1028,1043,'B'],[1084,1135,'B'],[1168,1171,'B']];
var r2=[[188,212,'r'],[216,263,'B'],[323,340,'B'],[348,363,'r'],[380,407,'r'],[424,475,'r'],[532,543,'B'],[543,571,'r'],[576,599,'B'],[603,617,'r'],[620,635,'B'],[640,672,'r'],[680,715,'r'],[724,762,'r'],[787,812,'r'],[817,840,'r'],[843,875,'B'],[880,895,'r'],[928,963,'r'],[963,991,'B'],[1028,1047,'B'],[1047,1083,'r'],[1084,1123,'B'],[1168,1171,'B']];
function sq(y,a){for(var x=168;x<=1170;x+=4){var c='#c4c4c4';a.forEach(function(s){if(x>=s[0]-1&&x<s[1])c=s[2]=='r'?'#ff0000':'#0000ff'});rc(x,y,3,4,c)}}
sq(638,r1);sq(645,r2);

/* pane 4 wave */
var wv=[[166,663],[232,663],[237,653],[241,661],[245,653],[250,663],[358,663],[364,670],[374,670],[378,663],[397,663],[402,671],[406,663],[452,663],[456,671],[460,663],[464,671],[468,663],[621,663],[625,654],[629,663],[655,663],[660,671],[664,671],[668,663],[745,663],[749,671],[753,663],[790,663],[794,671],[798,663],[802,671],[806,663],[1170,663]];
pl(wv,'#000',4);pl(wv,'#fff',1);

/* vertical grid */
[73,157,241,325,409,489,565,657,733,821,909,989,1081,1161,1282].forEach(function(x){o.push('<path d="M'+x+'.5 75V672" stroke="'+DS+'" stroke-dasharray="4 4"/>')});

/* ticks */
[102,135,168,201,234,267,300,333,366,399,432,463,538,553,628].forEach(function(y){o.push('<path d="M1321 '+y+'.5h3" stroke="'+DS+'"/>')});
var dates=['9 Aug 2016','31 Aug 2016','23 Sep 2016','17 Oct 2016','8 Nov 2016','1 Dec 2016','23 Dec 2016','19 Jan 2017','10 Feb 2017','7 Mar 2017','29 Mar 2017','21 Apr 2017','15 May 2017','7 Jun 2017','29 Jun 2017','24 Jul 2017','15 Aug 2017','7 Sep 2017','29 Sep 2017'];
dates.forEach(function(d,i){o.push('<path d="M'+(4+64*i)+'.5 672v5" stroke="'+DS+'"/>')});
o.push('<path d="M1036 75h12l-6 5z" fill="#bcbcbc"/>');

/* boxes */
function box(x,y,w,c,lx){if(lx!==undefined)o.push('<path d="M'+lx+' '+(y+6.5)+'H'+x+'" stroke="'+c+'"/>');o.push('<rect x="'+x+'.5" y="'+y+'.5" width="'+w+'" height="12" fill="#a6a6a6" stroke="'+c+'"/>')}
var boxes=[[199,86,37,'227.20','#0000ff',246],[1180,207,36,'190.21','#0000ff',1170],[1180,240,36,'180.29','#0000ff',1170],[1180,281,36,'167.56','#0000ff',1170],[1063,305,36,'160.10','#0000ff',1109],[1180,328,36,'155.03','#ff0000',1166],[1180,321,36,'155.44','#ff0000',1166],[1180,379,36,'137.43','#ff0000',1166],[1180,392,36,'133.90','#ff0000',1166],[911,420,37,'124.75','#ff0000',962]];
o.push('</g>');
boxes.forEach(function(b){o.push('<g shape-rendering="crispEdges">');box(b[0],b[1],b[2],b[4],b[5]);o.push('</g>');tx(b[0]+2,b[1]+10.5,b[3],'lbl',b[4])});

/* chart texts */
o.push('<path d="M8 80h7l-3.500 5z" fill="#2f4f4f"/>');
tx(20,85,'OJNov17,Daily&#160;&#160;153.50 159.25 153.45 157.95','hd');
tx(9,99,'0&#160;&#160;0','hd');
tx(10,107,'SuperGain Indicator (C)','sg');
tx(1118,136,'157.95','big');
[[1203,89,'100.0 227.20-D1'],[1205,128,'88.6 215.53-D1'],[1205,139,'85.4 212.24-D1'],[1205,161,'78.6 205.28-D1'],[1205,187,'70.7 197.18-D1'],[1217,217,'8 188.06-D1'],[1205,257,'50.0 175.97-D1'],[1205,275,'44.7 170.55-D1'],[1217,296,'2 163.89-D1'],[1206,424,'0.0 124.75-D1']].forEach(function(a){tx(a[0],a[1],a[2],'fibt')});
o.push('<defs><clipPath id="mt"><rect x="5" y="75" width="1316" height="361"/></clipPath></defs><g clip-path="url(#mt)">');
[[1260,309,'0.0 150.10-D1'],[1255,353,'38.2 146.60-D1'],[1255,361,'44.7 145.30-D1'],[1255,366,'50.0 142.43-D1'],[1255,380,'61.8 138.25-D1'],[1255,390,'70.7 135.11-D1'],[1255,400,'78.6 132.31-D1'],[1255,407,'85.4 129.91-D1'],[1255,411,'88.6 128.78-D1'],[1263,424,'100.0 124.75-D1']].forEach(function(a){tx(a[0],a[1],a[2],'fibb')});
tx(1250,438,'112.8 120.22-D1','','#b01010');
o.push('</g>');
['224.40','214.20','204.00','193.80','183.60','173.70','163.50','153.30','143.10','132.90','123.00'].forEach(function(t,i){tx(1325,[106,139,172,205,238,271,304,337,370,403,436][i],t,'ax')});
o.push('<rect x="1322" y="313" width="33" height="11" fill="#2f4f4f"/>');
tx(1324,322,'157.95','','#fff');
tx(1325,467,'1.5781','ax');tx(1325,542,'1.4166','ax');tx(1325,557,'1.5741','ax');tx(1325,632,'1.5013','ax');
tx(1326,641,'0.05','ax');tx(1326,646,'0.05','ax');tx(1326,649,'1','ax');
tx(1324,657,'100','ax');tx(1324,663,'0.00','ax');tx(1324,667,'-100','ax');
tx(167,468,'ND - 2 3.9286 0.0000 0.0000 0.0000&#160;&#160;ForexCounterAttack Filter 0.0000&#160;&#160;ForexCounterAttack Filter 0.0000&#160;&#160;D1 Didi Index 1.0193 1.0000 0.9801','hd');
tx(167,560,'OB','hd');
dates.forEach(function(d,i){tx(4+64*i,685,d,'ax')});
svg.innerHTML=o.join('');
})();
```
